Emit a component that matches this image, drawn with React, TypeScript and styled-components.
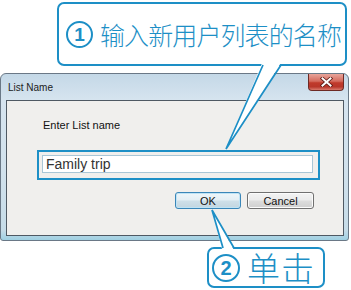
import styled, { createGlobalStyle } from "styled-components";

const GlobalStyle = createGlobalStyle`
  html, body {
    margin: 0;
    padding: 0;
    background: #ffffff;
  }
  body {
    font-family: "Liberation Sans", Arial, sans-serif;
  }
`;

const CALLOUT_BLUE = "#1d8fc6";

const Page = styled.div`
  position: relative;
  width: 351px;
  height: 290px;
  overflow: hidden;
  display: flex;
  flex-direction: column;
  background: #ffffff;
`;

const Callout = styled.div<{ $left: number; $width: number; $height: number; $top: number }>`
  box-sizing: border-box;
  margin-top: ${(p) => p.$top}px;
  margin-left: ${(p) => p.$left}px;
  width: ${(p) => p.$width}px;
  height: ${(p) => p.$height}px;
  border: 2px solid ${CALLOUT_BLUE};
  border-radius: 7px;
  background: #ffffff;
  display: flex;
  align-items: center;
  padding-left: ${(p) => (p.$width > 200 ? 7 : 3)}px;
  color: ${CALLOUT_BLUE};
`;

const StepBadge = styled.span<{ $size: number }>`
  box-sizing: border-box;
  flex: none;
  width: ${(p) => p.$size}px;
  height: ${(p) => p.$size}px;
  border: 2px solid ${CALLOUT_BLUE};
  border-radius: 50%;
  display: flex;
  align-items: center;
  justify-content: center;
  font-family: "Liberation Sans", Arial, sans-serif;
  font-weight: 700;
  font-size: ${(p) => Math.round(p.$size * 0.72)}px;
  line-height: 1;
  color: ${CALLOUT_BLUE};
`;

const CalloutText = styled.span<{ $size: number; $gap: number; $spacing: number }>`
  margin-left: ${(p) => p.$gap}px;
  font-family: "Noto Sans CJK SC", "Noto Sans", sans-serif;
  font-weight: 300;
  font-size: ${(p) => p.$size}px;
  letter-spacing: ${(p) => p.$spacing}px;
  line-height: 1;
  white-space: nowrap;
  color: ${CALLOUT_BLUE};
`;

const Window = styled.div`
  box-sizing: border-box;
  margin-top: 7px;
  width: 349px;
  height: 168px;
  border: 1px solid #6a7886;
  border-radius: 6px 6px 3px 3px;
  padding: 0 4px 4px 5px;
  display: flex;
  flex-direction: column;
  background: linear-gradient(
    to bottom,
    #c4d8e7 0px,
    #d6e4ef 26px,
    #d1e1ec 60%,
    #c6dce8 94%,
    #9fd0e2 100%
  );
`;

const TitleBar = styled.div`
  height: 26px;
  display: flex;
  align-items: flex-start;
  justify-content: space-between;
`;

const Title = styled.span`
  margin-top: 8px;
  padding-left: 2px;
  font-size: 10px;
  line-height: 12px;
  color: #1b1b1b;
`;

const CloseButton = styled.div`
  box-sizing: border-box;
  width: 36px;
  height: 17px;
  border: 1px solid #6d2a24;
  border-top: none;
  border-radius: 0 0 4px 4px;
  background: linear-gradient(to bottom, #e8a59b 0%, #d46b5e 45%, #c03a2b 55%, #b8362a 80%, #d97b6d 100%);
  display: flex;
  align-items: center;
  justify-content: center;
`;

const Panel = styled.div`
  box-sizing: border-box;
  height: 136px;
  border: 1px solid #4f5963;
  background: #f0efed;
  padding: 18px 0 0 30px;
  display: flex;
  flex-direction: column;
`;

const Prompt = styled.div`
  margin-left: 6px;
  font-size: 11px;
  line-height: 12px;
  color: #111111;
`;

const Highlight = styled.div`
  box-sizing: border-box;
  margin-top: 19px;
  width: 283px;
  height: 30px;
  border: 2px solid ${CALLOUT_BLUE};
  padding: 3px 5px 5px 3px;
`;

const TextField = styled.div`
  box-sizing: border-box;
  height: 18px;
  border: 1px solid #a9c6d6;
  background: #ffffff;
  padding-left: 3px;
  font-size: 14px;
  line-height: 16px;
  color: #333333;
`;

const ButtonRow = styled.div`
  margin-top: 12px;
  width: 283px;
  box-sizing: border-box;
  padding-right: 6px;
  display: flex;
  justify-content: flex-end;
  gap: 6px;
`;

const DialogButton = styled.div<{ $default?: boolean }>`
  box-sizing: border-box;
  width: ${(p) => (p.$default ? 66 : 67)}px;
  height: 17px;
  border: 1px solid ${(p) => (p.$default ? "#3a86b8" : "#707070")};
  border-radius: 3px;
  background: ${(p) =>
    p.$default
      ? "linear-gradient(to bottom, #eef6fa 0%, #e3eef4 48%, #cfe0e9 52%, #c3d6e0 100%)"
      : "linear-gradient(to bottom, #f3f3f3 0%, #ebebeb 48%, #dddddd 52%, #cfcfcf 100%)"};
  box-shadow: inset 0 0 0 1px ${(p) => (p.$default ? "#bfe3f5" : "#fbfbfb")};
  display: flex;
  align-items: center;
  justify-content: center;
  font-size: 11px;
  line-height: 12px;
  color: #111111;
`;

const Overlay = styled.svg`
  position: absolute;
  left: 0;
  top: 0;
  width: 351px;
  height: 290px;
  pointer-events: none;
`;

function CloseGlyph() {
  return (
    <svg width="13" height="10" viewBox="0 0 13 10">
      <path d="M2.5 1.5 L10.5 8.5 M10.5 1.5 L2.5 8.5" stroke="#5b1a14" strokeWidth="3.6" strokeLinecap="square" />
      <path d="M2.5 1.5 L10.5 8.5 M10.5 1.5 L2.5 8.5" stroke="#ffffff" strokeWidth="2" strokeLinecap="square" />
    </svg>
  );
}

export default function App() {
  return (
    <>
      <GlobalStyle />
      <Page>
        <Callout $top={2} $left={57} $width={290} $height={64}>
          <StepBadge $size={27}>1</StepBadge>
          <CalloutText $size={25} $gap={7} $spacing={-0.9}>
            输入新用户列表的名称
          </CalloutText>
        </Callout>

        <Window>
          <TitleBar>
            <Title>List Name</Title>
            <CloseButton>
              <CloseGlyph />
            </CloseButton>
          </TitleBar>
          <Panel>
            <Prompt>Enter List name</Prompt>
            <Highlight>
              <TextField>Family trip</TextField>
            </Highlight>
            <ButtonRow>
              <DialogButton $default>OK</DialogButton>
              <DialogButton>Cancel</DialogButton>
            </ButtonRow>
          </Panel>
        </Window>

        <Callout $top={6} $left={207} $width={118} $height={41}>
          <StepBadge $size={28}>2</StepBadge>
          <CalloutText $size={33} $gap={7} $spacing={1}>
            单击
          </CalloutText>
        </Callout>

        {/* callout tails drawn over the dialog */}
        <Overlay viewBox="0 0 351 290">
          <polygon points="262.5,62 281.5,62 226,149" fill="#ffffff" />
          <polyline points="263,65 226,149 281,65" fill="none" stroke={CALLOUT_BLUE} strokeWidth="1.7" />
          <polygon points="222.5,251 234.5,251 212,210" fill="#ffffff" />
          <polyline points="223,248 212,210 234,248" fill="none" stroke={CALLOUT_BLUE} strokeWidth="1.7" />
        </Overlay>
      </Page>
    </>
  );
}
